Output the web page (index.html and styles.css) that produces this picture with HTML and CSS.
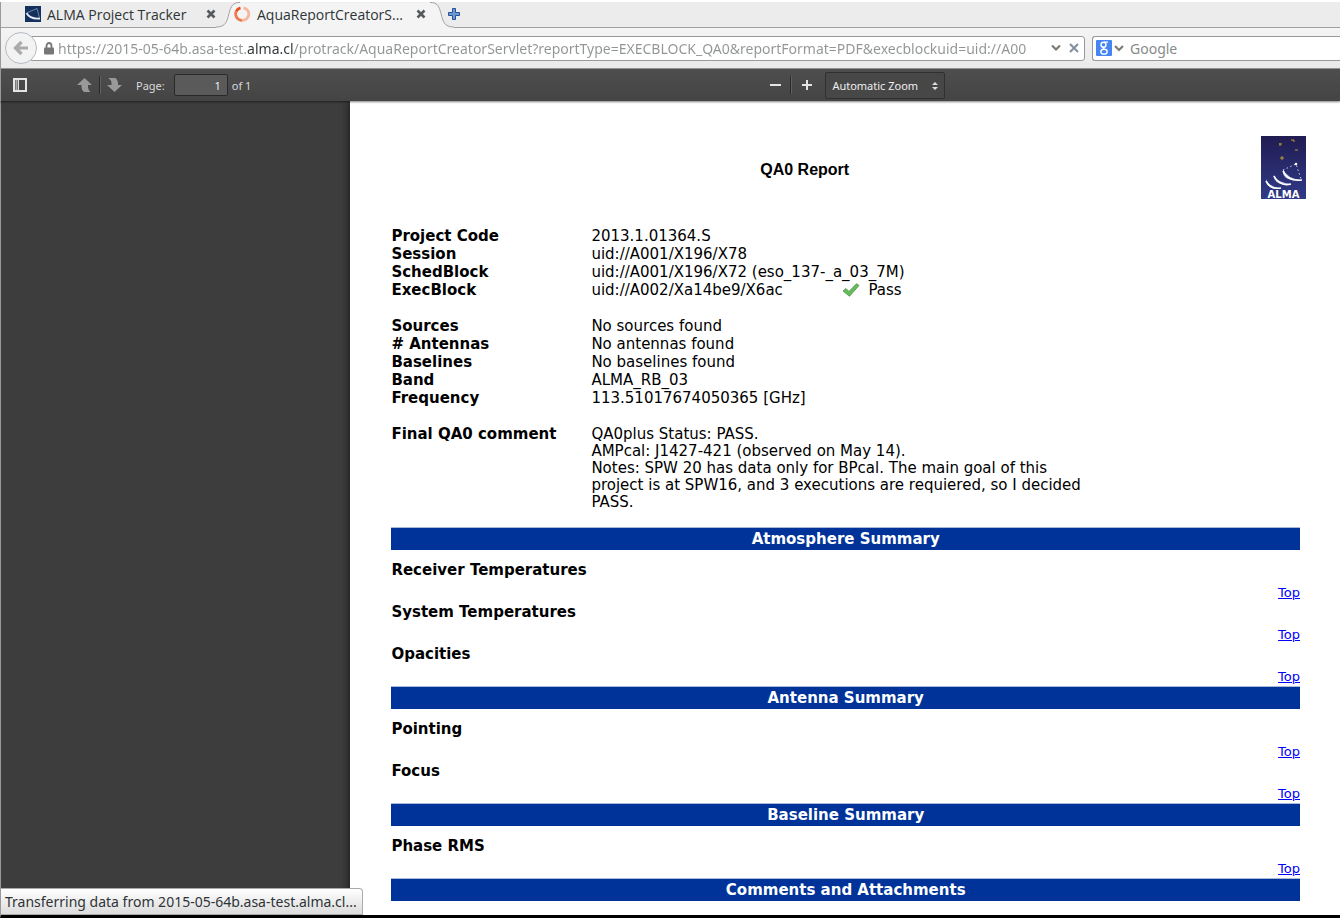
FILE: index.html
```html
<!DOCTYPE html>
<html lang="en">
<head>
<meta charset="utf-8">
<title>AquaReportCreatorServlet</title>
<link rel="stylesheet" href="styles.css">
</head>
<body>
<div class="window">
  <div class="tabs" role="tablist">
    <div class="tab" role="tab" aria-selected="false">
      <svg class="favicon" viewBox="0 0 16 16"><rect width="16" height="16" fill="#14305c"/><path d="M1.500 7Q5 13.500 15 12.500" fill="none" stroke="#e6edf8" stroke-width="1.800"/><path d="M1.500 7L12 2.500L14.500 12" fill="none" stroke="#8199be" stroke-width=".8"/></svg>
      <span class="tab-title">ALMA Project Tracker</span>
      <button class="icon-button" aria-label="Close ALMA Project Tracker"><svg width="10" height="10" viewBox="0 0 10 10"><path d="M1.500 1.500L8.500 8.500M8.500 1.500L1.500 8.500" stroke="#555b5c" stroke-width="2.600"/></svg></button>
    </div>
    <div class="tab tab-active" role="tab" aria-selected="true">
      <svg class="tab-shape" viewBox="0 0 238 27" preserveAspectRatio="none"><path d="M0 27V26C10 26 11 20 13 12C15 4 17 .5 24 .5H214C221 .5 223 4 225 12C227 20 228 26 238 26V27Z" fill="#f4f4f4"/><path d="M0 26C10 26 11 20 13 12C15 4 17 .5 24 .5M214 .5C221 .5 223 4 225 12C227 20 228 26 238 26" fill="none" stroke="#a0a0a0"/></svg>
      <svg class="favicon" viewBox="0 0 16 16" fill="none" stroke-width="2.800"><path d="M9.500 1.800A6.300 6.300 0 0 1 8 14.300" stroke="#f6b79b"/><path d="M8 14.300A6.300 6.300 0 0 1 2.200 5.500" stroke="#ee794e"/><path d="M2.200 5.500A6.300 6.300 0 0 1 6.500 1.900" stroke="#e6501e"/></svg>
      <span class="tab-title">AquaReportCreatorS...</span>
      <button class="icon-button" aria-label="Close AquaReportCreatorServlet"><svg width="10" height="10" viewBox="0 0 10 10"><path d="M1.500 1.500L8.500 8.500M8.500 1.500L1.500 8.500" stroke="#555b5c" stroke-width="2.600"/></svg></button>
    </div>
    <button class="icon-button new-tab" aria-label="New tab"><svg width="12" height="12" viewBox="0 0 12 12"><path d="M4.500.5h3v4h4v3h-4v4h-3v-4h-4v-3h4z" fill="#6e9ad0" stroke="#22509a"/></svg></button>
  </div>

  <div class="nav">
    <button class="back" aria-label="Back"><svg width="16" height="16" viewBox="0 0 16 16"><path d="M8.500 2L2.500 8L8.500 14M3 8H15" fill="none" stroke="#aaa" stroke-width="3.200"/></svg></button>
    <div class="address">
      <svg width="10" height="13" viewBox="0 0 10 13"><path d="M2.500 6V4A2.500 3 0 0 1 7.500 4V6" fill="none" stroke="#777" stroke-width="1.800"/><rect y="5.500" width="10" height="7" rx="1" fill="#777"/></svg>
      <input class="url" type="text" aria-label="Address" value="https://2015-05-64b.asa-test.alma.cl/protrack/AquaReportCreatorServlet?reportType=EXECBLOCK_QA0&amp;reportFormat=PDF&amp;execblockuid=uid://A00">
      <button class="icon-button" aria-label="Show history"><svg width="10" height="8" viewBox="0 0 10 8"><path d="M1 1.500L5 5.500L9 1.500" fill="none" stroke="#7c7c76" stroke-width="2.200"/></svg></button>
      <button class="icon-button stop" aria-label="Stop"><svg width="10" height="10" viewBox="0 0 10 10"><path d="M1 1L9 9M9 1L1 9" stroke="#8492a3" stroke-width="2.200"/></svg></button>
    </div>
    <div class="search">
      <button class="icon-button engine" aria-label="Search engine"><svg width="28" height="16" viewBox="0 0 28 16"><rect width="16" height="16" rx="1" fill="#4484f3"/><g fill="none" stroke="#fff" stroke-width="1.400"><ellipse cx="7.500" cy="4.700" rx="2.500" ry="2.500"/><path d="M8 2.100H12M8 7.200Q6 8.200 8.500 9.200"/><ellipse cx="8" cy="11.700" rx="3.200" ry="2.400"/></g><path d="M19 6L23 10L27 6" fill="none" stroke="#7c7c76" stroke-width="2.200"/></svg></button>
      <input class="query" type="text" aria-label="Search" placeholder="Google">
    </div>
  </div>

  <div class="toolbar">
    <div class="tools">
      <button class="icon-button" aria-label="Toggle sidebar"><svg width="14" height="14" viewBox="0 0 14 14"><rect x="1" y="1" width="12" height="12" fill="none" stroke="#e4e4e4" stroke-width="2"/><path d="M3.500 2V12" stroke="#aaa" stroke-width="2"/><path d="M5.500 2V12" stroke="#ddd"/></svg></button>
      <button class="icon-button previous" aria-label="Previous page"><svg width="16" height="14" viewBox="0 0 16 14"><path d="M7.500 0L15 7H11V9Q11 12 13.500 14H7Q4.500 12 4.500 9V7H0Z" fill="#999"/></svg></button>
      <span class="divider"></span>
      <button class="icon-button next" aria-label="Next page"><svg width="16" height="14" viewBox="0 0 16 14"><path d="M7.500 14L15 7H11V5Q11 2 8.500 0H1Q4.500 2 4.500 5V7H0Z" fill="#999"/></svg></button>
      <label for="page">Page:</label>
      <input id="page" class="page-number" type="text" value="1">
      <span>of 1</span>
    </div>
    <div class="tools zoom">
      <button class="icon-button" aria-label="Zoom out"><svg width="12" height="12" viewBox="0 0 12 12"><path d="M1 6H12" stroke="#e4e4e4" stroke-width="2"/></svg></button>
      <span class="divider"></span>
      <button class="icon-button" aria-label="Zoom in"><svg width="12" height="12" viewBox="0 0 12 12"><path d="M1 6H11M6 1V11" stroke="#e4e4e4" stroke-width="2"/></svg></button>
      <div class="scale">
        <select aria-label="Zoom"><option>Automatic Zoom</option></select>
        <svg class="arrows" width="6" height="8" viewBox="0 0 6 8"><path d="M0 3L3 0L6 3ZM0 5L3 8L6 5Z" fill="#ddd"/></svg>
      </div>
    </div>
  </div>

  <div class="viewer">
    <main class="paper">
      <header class="report-head">
        <h1>QA0 Report</h1>
        <svg class="logo" viewBox="0 0 45 63" role="img" aria-label="ALMA">
          <defs><linearGradient id="sky" x2="0" y2="1"><stop stop-color="#211c52"/><stop offset="1" stop-color="#303a87"/></linearGradient></defs>
          <rect width="45" height="63" fill="url(#sky)"/>
          <path d="M18 8h3M19 7v3M30 4h3v2M34 14h3M19 22h4M21 20v4" stroke="#b99c2c" fill="none"/>
          <path d="M22 34L35 28L40 43" fill="none" stroke="#c7c9e8" stroke-dasharray="1.500 2.500"/>
          <circle cx="35" cy="28" r="1.300" fill="#fff"/>
          <g fill="#c8cbe9"><path d="M22 33Q20 46 41 44Q26 43 22 33"/><path d="M12 39Q14 51 30 48Q17 47 12 39"/><path d="M5 43Q5 54 20 52Q8 51 5 43"/></g>
          <g fill="none" stroke="#fff" stroke-width="1.500"><path d="M22 35Q27 46 41 44M13 40Q19 51 30 48M5 45Q9 54 20 52"/></g>
          <text x="22.500" y="62" text-anchor="middle" class="logo-text">ALMA</text>
        </svg>
      </header>

      <dl class="facts">
        <dt>Project Code</dt><dd>2013.1.01364.S</dd>
        <dt>Session</dt><dd>uid://A001/X196/X78</dd>
        <dt>SchedBlock</dt><dd>uid://A001/X196/X72 (eso_137-_a_03_7M)</dd>
        <dt>ExecBlock</dt><dd class="exec"><span class="exec-id">uid://A002/Xa14be9/X6ac</span><svg width="18" height="14" viewBox="0 0 18 14"><path d="M1 8L4 5.500L7 8.500L14.500 .7L17 2.500L7.500 13.300Z" fill="#66bb5c" stroke="#4a9444" stroke-width=".8"/></svg><span>Pass</span></dd>
      </dl>
      <dl class="facts">
        <dt>Sources</dt><dd>No sources found</dd>
        <dt># Antennas</dt><dd>No antennas found</dd>
        <dt>Baselines</dt><dd>No baselines found</dd>
        <dt>Band</dt><dd>ALMA_RB_03</dd>
        <dt>Frequency</dt><dd>113.51017674050365 [GHz]</dd>
      </dl>
      <dl class="facts comment">
        <dt>Final QA0 comment</dt>
        <dd>QA0plus Status: PASS.<br>AMPcal: J1427-421 (observed on May 14).<br>Notes: SPW 20 has data only for BPcal. The main goal of this<br>project is at SPW16, and 3 executions are requiered, so I decided<br>PASS.</dd>
      </dl>

      <section class="summary">
        <h2>Atmosphere Summary</h2>
        <h3>Receiver Temperatures</h3><p><a href="#">Top</a></p>
        <h3>System Temperatures</h3><p><a href="#">Top</a></p>
        <h3>Opacities</h3><p><a href="#">Top</a></p>
      </section>
      <section class="summary">
        <h2>Antenna Summary</h2>
        <h3>Pointing</h3><p><a href="#">Top</a></p>
        <h3>Focus</h3><p><a href="#">Top</a></p>
      </section>
      <section class="summary">
        <h2>Baseline Summary</h2>
        <h3>Phase RMS</h3><p><a href="#">Top</a></p>
      </section>
      <section class="summary">
        <h2>Comments and Attachments</h2>
      </section>
    </main>
    <div class="status" role="status">Transferring data from 2015-05-64b.asa-test.alma.cl...</div>
  </div>
</div>
</body>
</html>
```
FILE: styles.css
```css
* { box-sizing: border-box; }

body {
  margin: 0;
  background: #fff;
  font: 14px "Noto Sans", "Open Sans", sans-serif;
  color: #2e3436;
}

.window {
  display: flex;
  flex-direction: column;
  height: 100vh;
  padding-top: 2px;
  border-bottom: 2px solid #fff;
}

button, input, select { font: inherit; color: inherit; }

.icon-button {
  display: flex;
  flex: none;
  padding: 0;
  border: 0;
  background: none;
}

/* Tab strip */
.tabs {
  display: flex;
  flex: none;
  height: 26px;
  padding-left: 24px;
  background: #ececec;
  border-left: 1px solid #999;
  box-shadow: inset 0 -1px #a0a0a0;
  font-family: "Open Sans", sans-serif;
}

.tab {
  display: flex;
  align-items: center;
  width: 191px;
  gap: 6px;
  padding-bottom: 2px;
}

.favicon { position: relative; flex: none; width: 16px; height: 16px; }
.tab-title { position: relative; flex: 1; white-space: nowrap; }
.tab .icon-button { position: relative; }

.tab-active {
  position: relative;
  width: 238px;
  padding: 0 28px 2px 18px;
  gap: 7px;
}

.tab-shape {
  position: absolute;
  inset: 0;
  width: 100%;
  height: 100%;
}

.new-tab { align-items: center; margin-left: -6px; padding-bottom: 2px; position: relative; }

/* Navigation bar */
.nav {
  display: flex;
  flex: none;
  align-items: center;
  height: 41px;
  padding-left: 4px;
  background: linear-gradient(#f4f4f4, #eaeaea);
  border-left: 1px solid #999;
  border-bottom: 1px solid #999;
}

.back {
  position: relative;
  z-index: 1;
  display: flex;
  flex: none;
  align-items: center;
  justify-content: center;
  width: 32px;
  height: 32px;
  padding: 0;
  border: 1px solid #b4bac2;
  border-radius: 50%;
  background: #f3f3f3;
}

.address, .search {
  display: flex;
  align-items: center;
  height: 25px;
  background: #fff;
  border: 1px solid #999;
}

.address {
  flex: 1;
  min-width: 0;
  margin-left: -6px;
  padding: 0 5px 0 12px;
  gap: 4px;
  border-radius: 0 3px 3px 0;
}

.url, .query {
  flex: 1;
  min-width: 0;
  height: 23px;
  padding: 0;
  border: 0;
  outline: 0;
}

/* The host's main domain is drawn darker than the rest of the address. */
.url {
  color: transparent;
  background: linear-gradient(90deg, #929595 189px, #2e3436 189px, #2e3436 236px, #929595 236px);
  background-clip: text;
  -webkit-background-clip: text;
}

.stop { margin-left: 4px; }

.search {
  flex: none;
  width: 248px;
  margin-left: 7px;
  padding-left: 3px;
  gap: 6px;
  border-right: 0;
  border-radius: 3px 0 0 3px;
}

.query { background: none; }
.query::placeholder { color: #888b8b; opacity: 1; }

/* Viewer toolbar */
.toolbar {
  position: relative;
  z-index: 1;
  display: grid;
  grid-template-columns: 57% auto;
  flex: none;
  align-items: center;
  height: 32px;
  padding-left: 12px;
  background: linear-gradient(#4e4e4e, #444);
  border-left: 1px solid #999;
  box-shadow: 0 1px 2px rgba(0, 0, 0, .5);
  color: #d9d9d9;
  font-size: 11px;
}

.tools { display: flex; align-items: center; gap: 6px; }
.zoom { gap: 9px; }
.previous { margin-left: 44px; }
.next { margin-right: 7px; }

.divider {
  width: 2px;
  height: 18px;
  background: #292929;
  border-right: 1px solid #606060;
}

.page-number {
  width: 54px;
  height: 22px;
  margin-left: 3px;
  padding: 0 6px;
  border: 1px solid #292929;
  border-radius: 2px;
  background: #5a5a5a;
  color: #eee;
  text-align: right;
}

.page-number + span { margin-left: -2px; }

.scale { position: relative; margin-left: 3px; }

.scale select {
  display: block;
  width: 120px;
  height: 27px;
  padding: 0 6px;
  appearance: none;
  border: 1px solid #303030;
  border-radius: 2px;
  background: #474747;
  color: #eee;
}

.arrows {
  position: absolute;
  top: 10px;
  right: 7px;
  pointer-events: none;
}

/* Document area */
.viewer {
  position: relative;
  display: flex;
  flex: 1;
  min-height: 0;
  padding-left: calc(26% + 1px);
  overflow: hidden;
  background: #3d3d3d;
  border-left: 1px solid #999;
  border-bottom: 3px solid #000;
}

.paper {
  flex: 1;
  padding: 35px 40px 0 41px;
  background: #fff;
  box-shadow: 0 0 8px #111;
  color: #000;
  font: 15px/18px "DejaVu Sans", sans-serif;
}

.report-head {
  position: relative;
  height: 64px;
  margin-bottom: 27px;
}

h1, h2, h3, p, dl, dd { margin: 0; }

h1 {
  padding: 24px 82px 0 0;
  font: bold 16px/20px "Liberation Sans", sans-serif;
  text-align: center;
}

.logo {
  position: absolute;
  top: 0;
  right: -6px;
  width: 45px;
  height: 63px;
}

.logo-text { fill: #fff; font: bold 10px "DejaVu Sans", sans-serif; }

.facts {
  display: grid;
  grid-template-columns: 200px 1fr;
  margin-bottom: 18px;
}

.facts dt { font-weight: bold; }
.exec { display: flex; align-items: center; gap: 8px; }
.exec-id { width: 243px; }
.comment { padding-top: 1px; margin-bottom: 16px; line-height: 17px; }

.summary h2 {
  height: 23px;
  margin-bottom: 10px;
  background: #039;
  border-top: 1px solid #a9b9dc;
  color: #fff;
  font-size: 15px;
  line-height: 22px;
  text-align: center;
}

.summary h3 { font-size: 15px; line-height: 20px; }
.summary p { padding-top: 3px; font-size: 13px; line-height: 19px; text-align: right; }
.summary a { color: #00f; }

.status {
  position: absolute;
  bottom: 0;
  left: 0;
  height: 27px;
  padding: 0 5px 0 4px;
  background: linear-gradient(#fff, #dcdcdc);
  border: 1px solid #aaa;
  border-left: 0;
  border-radius: 0 4px 0 0;
  color: #2e3436;
  line-height: 26px;
}
```
